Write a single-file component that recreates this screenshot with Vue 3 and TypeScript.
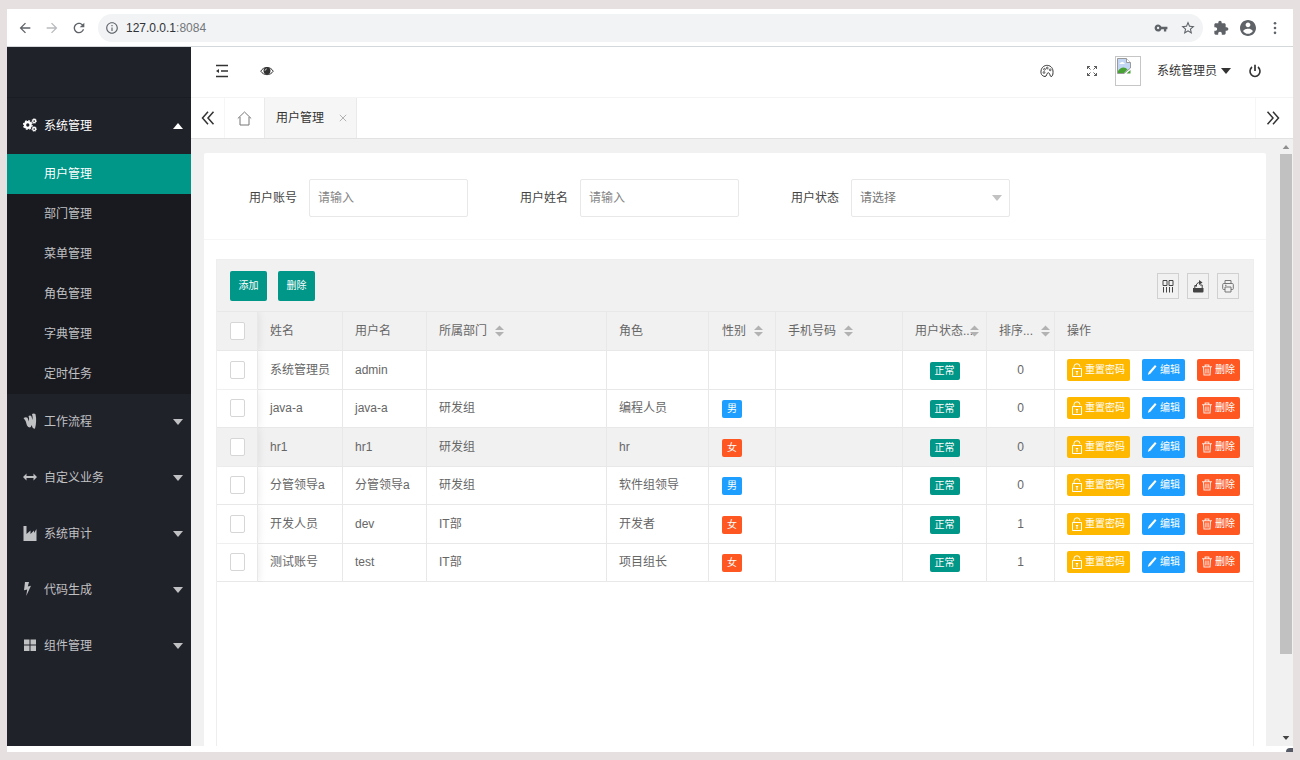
<script setup lang="ts">
import { h, ref } from 'vue'

interface Glyph { box: string; body: string }

const stroke = (d: string, w = 1.5) => `<path fill="none" stroke="currentColor" stroke-width="${w}" d="${d}"/>`
const fill = (d: string) => `<path fill="currentColor" fill-rule="evenodd" d="${d}"/>`

const glyphs: Record<string, Glyph> = {
  back: { box: '0 0 24 24', body: fill('M20 11H7.83l5.59-5.59L12 4l-8 8 8 8 1.41-1.41L7.83 13H20v-2z') },
  forward: { box: '0 0 24 24', body: fill('M12 4l-1.41 1.41L16.17 11H4v2h12.17l-5.58 5.59L12 20l8-8z') },
  reload: { box: '0 0 24 24', body: fill('M17.65 6.35C16.2 4.9 14.21 4 12 4c-4.42 0-7.99 3.58-7.99 8s3.57 8 7.99 8c3.73 0 6.84-2.55 7.73-6h-2.08c-.82 2.33-3.04 4-5.65 4-3.31 0-6-2.69-6-6s2.69-6 6-6c1.66 0 3.14.69 4.22 1.78L13 11h7V4l-2.35 2.35z') },
  info: { box: '0 0 24 24', body: fill('M11 7h2v2h-2zm0 4h2v6h-2zm1-9C6.48 2 2 6.48 2 12s4.48 10 10 10 10-4.48 10-10S17.52 2 12 2zm0 18c-4.41 0-8-3.59-8-8s3.59-8 8-8 8 3.59 8 8-3.59 8-8 8z') },
  key: { box: '0 0 24 24', body: fill('M12.65 10C11.83 7.67 9.61 6 7 6c-3.31 0-6 2.69-6 6s2.69 6 6 6c2.61 0 4.83-1.67 5.65-4H17v4h4v-4h2v-4H12.65zM7 14c-1.1 0-2-.9-2-2s.9-2 2-2 2 .9 2 2-.9 2-2 2z') },
  star: { box: '0 0 24 24', body: fill('M22 9.24l-7.19-.62L12 2 9.19 8.63 2 9.24l5.46 4.73L5.82 21 12 17.27 18.18 21l-1.63-7.03L22 9.24zM12 15.4l-3.76 2.27 1-4.28-3.32-2.88 4.38-.38L12 6.1l1.71 4.04 4.38.38-3.32 2.88 1 4.28L12 15.4z') },
  puzzle: { box: '0 0 24 24', body: fill('M20.5 11H19V7c0-1.1-.9-2-2-2h-4V3.5C13 2.12 11.88 1 10.5 1S8 2.12 8 3.5V5H4c-1.1 0-1.99.9-1.99 2v3.8H3.5c1.49 0 2.7 1.21 2.7 2.7s-1.21 2.7-2.7 2.7H2V20c0 1.1.9 2 2 2h3.8v-1.5c0-1.49 1.21-2.7 2.7-2.7 1.49 0 2.7 1.21 2.7 2.7V22H17c1.1 0 2-.9 2-2v-4h1.5c1.38 0 2.5-1.12 2.5-2.5S21.88 11 20.5 11z') },
  account: { box: '2 2 20 20', body: fill('M12 2C6.48 2 2 6.48 2 12s4.48 10 10 10 10-4.48 10-10S17.52 2 12 2zm0 3c1.66 0 3 1.34 3 3s-1.34 3-3 3-3-1.34-3-3 1.34-3 3-3zm0 14.2c-2.5 0-4.71-1.28-6-3.22.03-1.99 4-3.08 6-3.08 1.99 0 5.97 1.09 6 3.08-1.29 1.94-3.5 3.22-6 3.22z') },
  dots: { box: '0 0 16 16', body: '<g fill="currentColor"><circle cx="8" cy="2.5" r="1.5"/><circle cx="8" cy="8" r="1.5"/><circle cx="8" cy="13.500" r="1.5"/></g>' },
  fold: { box: '0 0 14 14', body: stroke('M1 1.500h12M6 7h7M1 12.500h12', 1.4) + fill('M1 7l3-2v4z') },
  eye: { box: '0 0 14 14', body: stroke('M.8 7.200C3.500 2.200 10.500 2.200 13.200 7.200C10.500 11.800 3.500 11.800 .8 7.200z', 1) + '<circle cx="7" cy="6.800" r="3.500" fill="currentColor"/><path d="M5 6.800q.2-1.800 1.900-2" stroke="#fff" stroke-width=".7" fill="none"/>' },
  palette: { box: '0 0 14 14', body: stroke('M5 12.500C1.500 12 .7 9.500 1 7C1.500 3 4.500 1.200 7.500 1.400C11 1.600 13.300 4.500 13 8.500C13 10.500 12.500 12.700 11 12.500C9.500 12.300 10.500 9.300 8.500 8.800C6.300 8.500 7 12.800 5 12.500z', 1) + '<g fill="none" stroke="currentColor" stroke-width=".8"><circle cx="4" cy="8.500" r=".9"/><circle cx="4.500" cy="5.300" r=".9"/><circle cx="7.300" cy="4" r=".9"/><circle cx="10.200" cy="5.800" r=".9"/></g>' },
  expand: { box: '0 0 12 12', body: stroke('M1.500 4V1.500H4M1.500 1.500L4.500 4.500M8 1.500h2.500V4M10.500 1.500L7.500 4.500M1.500 8v2.500H4M1.500 10.500L4.500 7.500M8 10.500h2.500V8M10.500 10.500L7.500 7.500', 0.8) },
  power: { box: '0 0 14 14', body: stroke('M4 3A5 5.300 0 1 0 10 3', 1.6) + stroke('M7 .8v6.200', 1.7) },
  left: { box: '0 0 14 14', body: stroke('M7 .8L1.500 7L7 13.200M12.500 .8L7 7l5.500 6.200', 1.5) },
  right: { box: '0 0 14 14', body: stroke('M1.500 .8L7 7l-5.500 6.200M7 .8L12.500 7L7 13.200', 1.5) },
  home: { box: '0 0 15 15', body: stroke('M.8 7.500L7.500 1l6.700 6.500M3 6v8h9V6', 1) },
  close: { box: '0 0 8 8', body: stroke('M.8 .8l6.400 6.400M7.200 .8L.8 7.200', 0.9) },
  down: { box: '0 0 10 6', body: fill('M0 0h10L5 6z') },
  up: { box: '0 0 10 6', body: fill('M0 6h10L5 0z') },
  sort: { box: '0 0 10 12', body: fill('M0 5h10L5 0zM0 7h10L5 12z') },
  gears: { box: '0 0 14 14', body: '<g fill="none" stroke="currentColor"><circle cx="4.800" cy="7" r="2.800" stroke-width="2.300"/><circle cx="4.800" cy="7" r="4.300" stroke-width="1.300" stroke-dasharray="1.800 1.577"/><circle cx="11.200" cy="3" r="1.500" stroke-width="1.300"/><circle cx="11.200" cy="3" r="2.400" stroke-width=".7" stroke-dasharray="1 .885"/><circle cx="11.200" cy="11" r="1.500" stroke-width="1.300"/><circle cx="11.200" cy="11" r="2.400" stroke-width=".7" stroke-dasharray="1 .885"/></g>' },
  wallet: { box: '0 0 14 16', body: fill('M.5 5Q3 3.500 4.500 4.800L6 8.500Q6.500 5 5.500 3Q7.500 2 8.500 3.500L9.500 7Q9.800 3 9 1Q11 0 12.500 1.200Q14 8 12 15.500Q10.500 16 9.500 14.500L8.700 12Q8 14 7 14.500Q5 14.500 4 12.500Q3.500 8 .5 5z') },
  arrows: { box: '0 0 14 14', body: fill('M0 7l3.500-3.500v2.500h7V3.500L14 7l-3.500 3.500V8h-7v2.500z') },
  chart: { box: '0 0 14 16', body: fill('M.5 1H3.500V9L7.500 5.500V9L11 5.500V8L13.500 4V16H.5z') },
  bolt: { box: '0 0 8 16', body: fill('M2 1h4L4.800 5.500L8 4.700L3.200 15l1-6.500L1 9.300z') },
  grid: { box: '0 0 14 14', body: fill('M1 1.500h5.500V6.500H1zM7.500 1.500H13v5H7.500zM1 7.500h5.500v5.500H1zM7.500 7.500H13v5.500H7.500z') },
  columns: { box: '0 0 12 14', body: stroke('M1 1.500h4v5H1zM7 1.500h4v5H7zM1.500 8v5.500M4.500 8v5.500M7.500 8v5.500M10.500 8v5.500', 1) },
  export: { box: '0 0 12 14', body: fill('M1 9h10.500v3.500q0 1-1 1H2q-1 0-1-1z') + stroke('M2.800 9V6.500h2M8 6h2.200v3M4 8Q4 3.500 8 3.500', 1) + fill('M7 1l3.500 2.500L7 6z') },
  print: { box: '0 0 12 14', body: stroke('M3 4.500V1.500h6v3M3 10.500H1.500q-.8 0-.8-1V5.500q0-1 1-1h8.600q1 0 1 1v4q0 1-.8 1H9M3 8h6v5H3zM3 6.300h1.500', 1) },
  lock: { box: '0 0 10 14', body: stroke('M.5 5.500h9v8h-9zM2 5.500V3.500Q2 .8 5 .8T8 3.800', 1) + stroke('M5 8v4M3.800 8.500h2.400', 1) },
  pencil: { box: '0 0 10 12', body: fill('M8 1l1.500 1.500L3.500 9.500L.8 11L1.800 8z') },
  trash: { box: '0 0 10 12', body: '<g opacity=".85">' + stroke('M0 2.700h10M3.200 2.500V1h3.600v1.500M1.500 3l.5 8h6l.5-8', 1.1) + stroke('M3.700 4.500V9.500M5 4.500v5M6.300 4.500v5', 0.8) + '</g>' },
  broken: { box: '0 0 14 16', body: '<path d="M.5 .5h9L13.500 4.500V10L7 15.500H.5z" fill="#c3d7f5" stroke="#9a9a9a"/><path d="M9.500 .5v4h4" fill="#fff" stroke="#9a9a9a"/><path d="M2.500 6q0-1.500 1.500-1.500q1-1.500 2.500 0q1.200 0 1.200 1.500z" fill="#fff"/><path d="M1 15v-2q2-3.500 5.500-3.500q2.500 0 4 2L7 15z" fill="#47a233"/><path d="M9.500 15.500L13.500 12v3.500z" fill="#47a233"/>' },
}

const Icon = (props: { name: string }) =>
  h('svg', {
    class: ['icon', `i-${props.name}`],
    viewBox: glyphs[props.name].box,
    'aria-hidden': 'true',
    innerHTML: glyphs[props.name].body,
  })
Icon.props = ['name']

const systemItems = ['用户管理', '部门管理', '菜单管理', '角色管理', '字典管理', '定时任务']
const groups = [
  { icon: 'wallet', label: '工作流程' },
  { icon: 'arrows', label: '自定义业务' },
  { icon: 'chart', label: '系统审计' },
  { icon: 'bolt', label: '代码生成' },
  { icon: 'grid', label: '组件管理' },
]
const active = ref('用户管理')

interface User { name: string; login: string; dept: string; role: string; sex: string; order: number }
const users: User[] = [
  { name: '系统管理员', login: 'admin', dept: '', role: '', sex: '', order: 0 },
  { name: 'java-a', login: 'java-a', dept: '研发组', role: '编程人员', sex: '男', order: 0 },
  { name: 'hr1', login: 'hr1', dept: '研发组', role: 'hr', sex: '女', order: 0 },
  { name: '分管领导a', login: '分管领导a', dept: '研发组', role: '软件组领导', sex: '男', order: 0 },
  { name: '开发人员', login: 'dev', dept: 'IT部', role: '开发者', sex: '女', order: 1 },
  { name: '测试账号', login: 'test', dept: 'IT部', role: '项目组长', sex: '女', order: 1 },
]
</script>

<template>
  <div class="desktop">
    <div class="browser">
      <div class="toolbar">
        <button class="plain nav" aria-label="后退"><Icon name="back" /></button>
        <button class="plain nav dim" aria-label="前进"><Icon name="forward" /></button>
        <button class="plain nav" aria-label="刷新"><Icon name="reload" /></button>
        <div class="address">
          <Icon name="info" />
          <span class="url">127.0.0.1<span class="port">:8084</span></span>
          <button class="plain nav" aria-label="密码"><Icon name="key" /></button>
          <button class="plain nav" aria-label="收藏"><Icon name="star" /></button>
        </div>
        <button class="plain nav" aria-label="扩展程序"><Icon name="puzzle" /></button>
        <button class="plain nav" aria-label="账户"><Icon name="account" /></button>
        <button class="plain nav" aria-label="更多"><Icon name="dots" /></button>
      </div>

      <div class="app">
        <nav class="side">
          <div class="logo"></div>
          <button class="plain group open"><Icon name="gears" /><span class="label">系统管理</span><Icon name="up" /></button>
          <div class="sub">
            <a v-for="item in systemItems" :key="item" href="#" :class="{ on: item === active }" @click.prevent="active = item">{{ item }}</a>
          </div>
          <button v-for="g in groups" :key="g.label" class="plain group">
            <Icon :name="g.icon" /><span class="label">{{ g.label }}</span><Icon name="down" />
          </button>
        </nav>

        <div class="main">
          <header class="head">
            <button class="plain" aria-label="侧边伸缩"><Icon name="fold" /></button>
            <button class="plain" aria-label="查看"><Icon name="eye" /></button>
            <span class="space"></span>
            <button class="plain" aria-label="主题"><Icon name="palette" /></button>
            <button class="plain" aria-label="全屏"><Icon name="expand" /></button>
            <span class="avatar"><Icon name="broken" /></span>
            <button class="plain user">系统管理员<Icon name="down" /></button>
            <button class="plain exit" aria-label="退出"><Icon name="power" /></button>
          </header>
          <div class="tabs">
            <button class="plain prev" aria-label="向左"><Icon name="left" /></button>
            <button class="plain house" aria-label="首页"><Icon name="home" /></button>
            <div class="tab"><a href="#">用户管理</a><button class="plain" aria-label="关闭"><Icon name="close" /></button></div>
            <span class="space"></span>
            <button class="plain next" aria-label="向右"><Icon name="right" /></button>
          </div>

          <div class="body">
            <section class="card">
              <form class="filters" @submit.prevent>
                <div class="field"><label for="account">用户账号</label><input id="account" type="text" placeholder="请输入"></div>
                <div class="field"><label for="fullname">用户姓名</label><input id="fullname" type="text" placeholder="请输入"></div>
                <div class="field">
                  <label for="state">用户状态</label>
                  <span class="pick"><select id="state"><option>请选择</option></select><Icon name="down" /></span>
                </div>
              </form>
              <div class="grid">
                <div class="tools">
                  <button class="add">添加</button>
                  <button class="add">删除</button>
                  <span class="space"></span>
                  <button class="tool" aria-label="筛选列"><Icon name="columns" /></button>
                  <button class="tool" aria-label="导出"><Icon name="export" /></button>
                  <button class="tool" aria-label="打印"><Icon name="print" /></button>
                </div>
                <table>
                  <colgroup>
                    <col class="c-check"><col class="c-name"><col class="c-login"><col><col class="c-role">
                    <col class="c-sex"><col class="c-phone"><col class="c-state"><col class="c-order"><col class="c-act">
                  </colgroup>
                  <thead>
                    <tr>
                      <th class="check"><input type="checkbox" aria-label="全选"></th>
                      <th>姓名</th>
                      <th>用户名</th>
                      <th>所属部门<Icon name="sort" /></th>
                      <th>角色</th>
                      <th class="sex">性别<Icon name="sort" /></th>
                      <th>手机号码<Icon name="sort" /></th>
                      <th class="tight">用户状态...<Icon name="sort" /></th>
                      <th>排序...<Icon name="sort" /></th>
                      <th>操作</th>
                    </tr>
                  </thead>
                  <tbody>
                    <tr v-for="u in users" :key="u.login" :class="{ hover: u.login === 'hr1' }">
                      <td class="check"><input type="checkbox" :aria-label="u.name"></td>
                      <td>{{ u.name }}</td>
                      <td>{{ u.login }}</td>
                      <td>{{ u.dept }}</td>
                      <td>{{ u.role }}</td>
                      <td class="sex"><span v-if="u.sex" class="badge" :class="u.sex === '男' ? 'blue' : 'red'">{{ u.sex }}</span></td>
                      <td></td>
                      <td class="mid"><span class="badge green">正常</span></td>
                      <td class="mid">{{ u.order }}</td>
                      <td>
                        <div class="acts">
                          <button class="yellow"><Icon name="lock" />重置密码</button>
                          <button class="blue"><Icon name="pencil" />编辑</button>
                          <button class="red"><Icon name="trash" />删除</button>
                        </div>
                      </td>
                    </tr>
                  </tbody>
                </table>
              </div>
            </section>
            <div class="scroll"><Icon name="up" /><div class="thumb"></div><Icon name="down" /></div>
          </div>
        </div>
      </div>
      <span class="corner"></span>
    </div>
  </div>
</template>

<style>
body { margin: 0; background: #e6e0e0; }
</style>

<style scoped>
* { box-sizing: border-box; }
.desktop {
  min-height: 100vh;
  display: flex;
  padding: 9px 7px 8px;
  background: #e6e0e0;
  font: 12px/20px "Liberation Sans", "Noto Sans CJK SC", sans-serif;
  color: #666;
}
button, input, select { font: inherit; color: inherit; margin: 0; }
a { color: inherit; text-decoration: none; }
.icon { display: block; flex: none; width: 14px; height: 14px; }
.space { flex: 1; }
.plain { border: 0; padding: 0; background: none; display: flex; align-items: center; justify-content: center; }
.i-down, .i-up { width: 10px; height: 6px; }

.browser { position: relative; flex: 1; min-width: 0; display: flex; flex-direction: column; background: #fff; padding-bottom: 6px; }
.toolbar { display: flex; align-items: center; height: 38px; padding: 0 5px 0 4px; border-bottom: 1px solid #d5d8db; color: #5f6368; }
.nav { width: 27px; height: 28px; }
.nav .icon { width: 16px; height: 16px; }
.nav .i-key { width: 14px; height: 14px; }
.nav .i-dots { width: 14px; height: 14px; }
.nav.dim { color: #b8babd; }
.address { flex: 1; display: flex; align-items: center; height: 28px; margin: 0 4px 0 6px; padding: 0 2px 0 7px; border-radius: 14px; background: #f1f3f4; }
.url { flex: 1; margin-left: 7px; color: #303236; }
.port { color: #74777b; }

.app { flex: 1; display: flex; min-height: 0; }
.side { width: 184px; flex: none; background: #20222a; color: #c0c1c3; }
.logo { height: 51px; border-bottom: 1px solid #1b1d24; }
.group { width: 100%; height: 56px; padding: 0 8px 0 16px; justify-content: flex-start; }
.group .label { flex: 1; text-align: left; }
.group .icon:first-child { margin-right: 7px; margin-bottom: 3px; }
.group .i-wallet, .group .i-chart { height: 16px; }
.group .i-bolt { width: 8px; height: 16px; }
.group .i-bolt:first-child { margin-right: 13px; }
.open { color: #fff; }
.sub { background: #191a20; }
.sub a { display: block; height: 40px; line-height: 40px; padding-left: 37px; }
.sub .on { background: #009688; color: #fff; }

.main { flex: 1; min-width: 0; display: flex; flex-direction: column; }
.head { display: flex; align-items: center; height: 51px; padding: 0 26px 3px 8px; border-bottom: 1px solid #f4f4f4; color: #333; }
.head .plain { width: 45px; height: 40px; }
.head .i-expand { width: 12px; height: 12px; }
.avatar { width: 26px; height: 30px; padding: 1px; border: 1px solid #c6c6c6; }
.avatar .icon { width: 14px; height: 16px; }
.head .user { width: auto; margin-left: 16px; gap: 4px; }
.head .exit { width: 24px; margin-left: 12px; }
.tabs { display: flex; height: 41px; border-bottom: 1px solid #e2e2e2; color: #333; }
.prev { width: 34px; border-right: 1px solid #f6f6f6; }
.house { width: 39px; color: #777; }
.i-home { width: 15px; height: 15px; }
.tab { display: flex; align-items: center; gap: 15px; padding: 0 9px 0 11px; border: 1px solid #eaeaea; border-width: 0 1px; background: #f6f6f6; }
.i-close { width: 8px; height: 8px; color: #aaa; }
.next { width: 38px; padding-right: 4px; border-left: 1px solid #f6f6f6; }

.body { flex: 1; display: flex; min-height: 0; padding-left: 13px; background: #f1f1f1; }
.card { flex: 1; min-width: 0; display: flex; flex-direction: column; margin: 14px 14px 0 0; background: #fff; border-radius: 2px 2px 0 0; }
.filters { display: flex; flex-wrap: wrap; gap: 12px 52px; padding: 26px 45px 22px; border-bottom: 1px solid #f6f6f6; }
.field { display: flex; align-items: center; gap: 12px; color: #444; }
.field input, .field select { display: block; width: 159px; height: 38px; padding: 0 8px; border: 1px solid #e8e8e8; border-radius: 2px; background: #fff; color: #777; outline: 0; appearance: none; }
.field input::placeholder { color: #858585; opacity: 1; }
.pick { position: relative; }
.pick .icon { position: absolute; right: 8px; top: 16px; color: #c2c2c2; pointer-events: none; }

.grid { flex: 1; margin: 19px 12px 0; border: 1px solid #eee; border-bottom: 0; }
.tools { display: flex; align-items: center; gap: 8px; height: 52px; padding: 0 14px 0 13px; border-bottom: 1px solid #e8e8e8; background: #f1f1f1; }
.add { width: 37px; height: 30px; padding: 0; margin-right: 3px; border: 0; border-radius: 2px; background: #009688; color: #fff; font-size: 10px; }
.tool { width: 22px; height: 26px; padding: 0; display: flex; align-items: center; justify-content: center; border: 1px solid #d0d0d0; background: none; color: #444; }
.tool .icon { width: 12px; height: 14px; }
.tool .i-print { color: #777; }
table { width: 100%; height: 270px; table-layout: fixed; border-collapse: separate; border-spacing: 0; }
thead th { height: 39px; }
tbody td { height: 38px; }
.c-check { width: 41px; }
.c-name { width: 85px; }
.c-login { width: 84px; }
.c-role { width: 102px; }
.c-sex { width: 67px; }
.c-phone { width: 127px; }
.c-state { width: 84px; }
.c-order { width: 68px; }
.c-act { width: 198px; }
th, td { padding: 0 0 0 12px; border: 1px solid #e8e8e8; border-width: 0 1px 1px 0; font-weight: 400; text-align: left; white-space: nowrap; }
th:last-child, td:last-child { border-right: 0; }
th, .hover td { background: #f1f1f1; }
.sex { padding-left: 13px; }
.mid { padding: 0; text-align: center; }
.check { position: relative; padding: 0 0 0 13px; box-shadow: 1px 0 8px rgba(0, 0, 0, .08); clip-path: inset(0 -10px 0 0); }
.check input { display: block; width: 15px; height: 18px; appearance: none; border: 1px solid #d6d6d6; border-radius: 2px; background: #fff; }
.i-sort { display: inline-block; width: 9px; height: 12px; margin-left: 8px; vertical-align: -2px; color: #b2b2b2; }
.tight .i-sort { margin-left: -3px; }
.badge { display: inline-block; height: 18px; padding: 0 5px; border-radius: 2px; color: #fff; font-size: 10px; line-height: 18px; vertical-align: middle; }
.green { background: #009688; }
.blue { background: #1e9fff; }
.red { background: #ff5722; }
.yellow { background: #ffb800; }
.acts { display: flex; gap: 12px; }
.acts button { display: flex; align-items: center; gap: 3px; height: 22px; padding: 0 5px; border: 0; border-radius: 2px; color: #fff; font-size: 10px; }
.acts .icon { width: 10px; height: 12px; }
.acts .i-lock { height: 14px; }

.scroll { width: 13px; display: flex; flex-direction: column; align-items: center; padding: 6px 1px 6px 0; gap: 5px; }
.scroll .icon { width: 8px; height: 4px; color: #8f8f8f; }
.scroll .i-down { margin-top: auto; color: #444; }
.thumb { width: 12px; height: 84%; background: #c1c1c1; }
.corner { position: absolute; right: 0; bottom: 0; width: 7px; height: 4px; border-radius: 5px 0 0 0; background: #565a66; }
</style>
